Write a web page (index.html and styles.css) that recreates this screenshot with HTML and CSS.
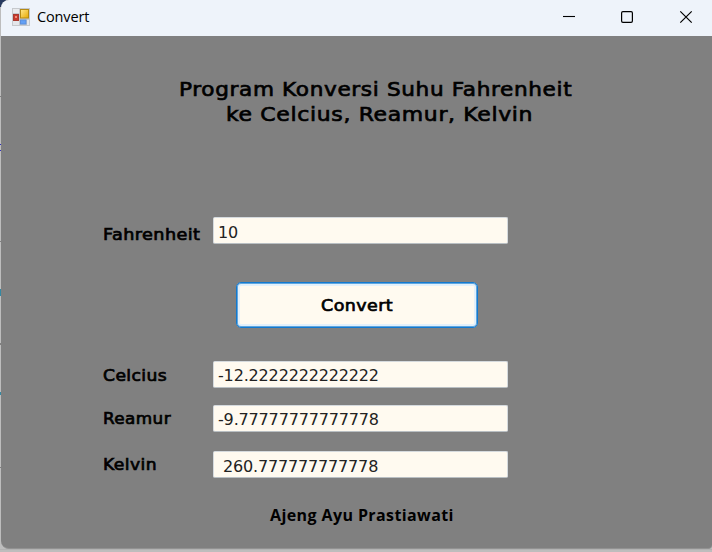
FILE: index.html
```html
<!DOCTYPE html>
<html lang="id">
<head>
<meta charset="utf-8">
<title>Convert</title>
<link rel="stylesheet" href="styles.css">
</head>
<body>
<div class="desktop">
<main class="window">
  <header class="titlebar">
    <svg class="app-icon" width="18" height="18" viewBox="0 0 18 18">
      <defs>
        <linearGradient id="gold" x1="0" y1="0" x2="1" y2="1"><stop offset="0" stop-color="#ffe88c"/><stop offset="1" stop-color="#e8a800"/></linearGradient>
      </defs>
      <rect width="18" height="18" fill="#c6c9cd"/>
      <rect x="1" y="1" width="6" height="4" fill="#e9ebee"/>
      <rect x="1" y="13" width="6" height="4" fill="#e4e6ea"/>
      <rect x="15" y="12" width="2" height="5" fill="#e4e6ea"/>
      <rect x="1.500" y="6.500" width="5" height="6" fill="#c93a2c" stroke="#a83a30"/>
      <rect x="3" y="8" width="2" height="2" fill="#f08b79"/>
      <rect x="8.500" y="1.500" width="8" height="8.500" fill="url(#gold)" stroke="#b58a14"/>
      <rect x="8.500" y="12" width="5.500" height="4" fill="#62a0f6" stroke="#5b8fdc"/>
    </svg>
    <span class="caption">Convert</span>
    <svg class="controls" width="130" height="14" viewBox="0 0 130 14" fill="none" stroke="#000">
      <path d="M0 6.500H12" stroke-width="1.100"/>
      <rect x="58.600" y="1.600" width="10.800" height="10.800" rx="1.300" stroke-width="1.200"/>
      <path d="M117.300 1.300L128.700 12.700M128.700 1.300L117.300 12.700" stroke-width="1.200"/>
    </svg>
  </header>
  <section class="form">
    <h1 class="heading"><span class="line one">Program Konversi Suhu Fahrenheit</span><span class="line two">ke Celcius, Reamur, Kelvin</span></h1>
    <div class="row source"><label class="label">Fahrenheit</label><div class="field">10</div></div>
    <button class="convert"><span class="convert-text">Convert</span></button>
    <div class="row celcius"><label class="label">Celcius</label><div class="field">-12.2222222222222</div></div>
    <div class="row reamur"><label class="label">Reamur</label><div class="field">-9.77777777777778</div></div>
    <div class="row kelvin"><label class="label">Kelvin</label><div class="field"> 260.777777777778</div></div>
    <footer class="author">Ajeng Ayu Prastiawati</footer>
  </section>
</main>
</div>
</body>
</html>
```
FILE: styles.css
```css
* { box-sizing: border-box; }
body { margin: 0; font-family: "DejaVu Sans", sans-serif; color: #000; overflow: hidden; }
.desktop {
  width: 712px; height: 552px; padding-left: 1px;
  background:
    linear-gradient(#3030c0, #3030c0) 0 144px / 1px 1px no-repeat,
    linear-gradient(#3030c0, #3030c0) 0 150px / 1px 1px no-repeat,
    linear-gradient(#808080, #808080) 0 96px / 1px 1px no-repeat,
    linear-gradient(#808080, #808080) 0 241px / 1px 1px no-repeat,
    linear-gradient(#3489a3, #3489a3) 0 289px / 1px 7px no-repeat,
    linear-gradient(#808080, #808080) 0 343px / 1px 2px no-repeat,
    linear-gradient(#3489a3, #3489a3) 0 392px / 1px 3px no-repeat,
    linear-gradient(#808080, #808080) 0 467px / 1px 1px no-repeat,
    linear-gradient(#283b60, #283b60) 0 0 / 6px 7px no-repeat,
    linear-gradient(#b3b3b3, #b3b3b3) 0 549px / 712px 1px no-repeat,
    #bdbdbd;
}
.window { width: 711px; height: 549px; overflow: hidden; border-radius: 8px 0 4px 8px; background: #808080; border-bottom: 1px solid #929292; }
.titlebar { height: 36px; display: flex; align-items: center; padding: 0 19px 3px 11px; background: #eef3fa; }
.caption { margin-left: 7px; font: 14.500px/18px "Open Sans", sans-serif; letter-spacing: -0.150px; }
.controls { margin-left: auto; }
.form { height: 512px; padding-top: 41px; display: flex; flex-direction: column; }
.heading { margin: 0; font-size: 20px; line-height: 25px; font-weight: 400; white-space: nowrap; -webkit-text-stroke: 0.700px #000; }
.line { display: block; width: max-content; transform-origin: 0 50%; letter-spacing: 0.600px; }
.one { margin-left: 178px; transform: scaleX(1.079); }
.two { margin-left: 225px; transform: scaleX(1.097); }
.row { height: 27px; display: flex; align-items: flex-start; margin-left: 102px; }
.source { margin-top: 90px; }
.celcius { margin-top: 33px; }
.reamur { margin-top: 17px; }
.kelvin { margin-top: 19px; }
.label { width: 110px; padding-top: 5px; font-size: 16px; line-height: 19px; letter-spacing: 0.400px; -webkit-text-stroke: 0.700px #000; transform: scaleX(1.07); transform-origin: 0 50%; }
.source .label { padding-top: 8px; transform: scaleX(1.1); }
.reamur .label { padding-top: 4px; transform: scaleX(1.05); }
.kelvin .label { padding-top: 4px; }
.field { width: 295px; height: 27px; flex: none; padding: 5px 4px 0; border: 1px solid #d5dade; border-bottom-color: #b9bfc3; border-radius: 2px; background: #fffaf0; color: #222; font-size: 16px; line-height: 19px; letter-spacing: -0.160px; white-space: pre; }
.celcius .field, .reamur .field { padding-top: 4px; }
.kelvin .field { padding-top: 5px; }
.convert { width: 242px; height: 46px; margin: 38px 0 0 235px; padding: 1px 0 0; border: 1px solid #1279cf; border-radius: 5px; background: #fffaf0; box-shadow: inset 0 0 0 1px #5fa6df, inset 0 0 0 3px #e3f0fa; font: 16px/20px "DejaVu Sans", sans-serif; letter-spacing: 0.400px; color: #000; -webkit-text-stroke: 0.700px #000; }
.convert-text { display: inline-block; transform: scaleX(1.09); }
.author { margin: 26px 0 0 269px; font: 700 16px/22px "Open Sans", sans-serif; letter-spacing: 0.400px; }
```
